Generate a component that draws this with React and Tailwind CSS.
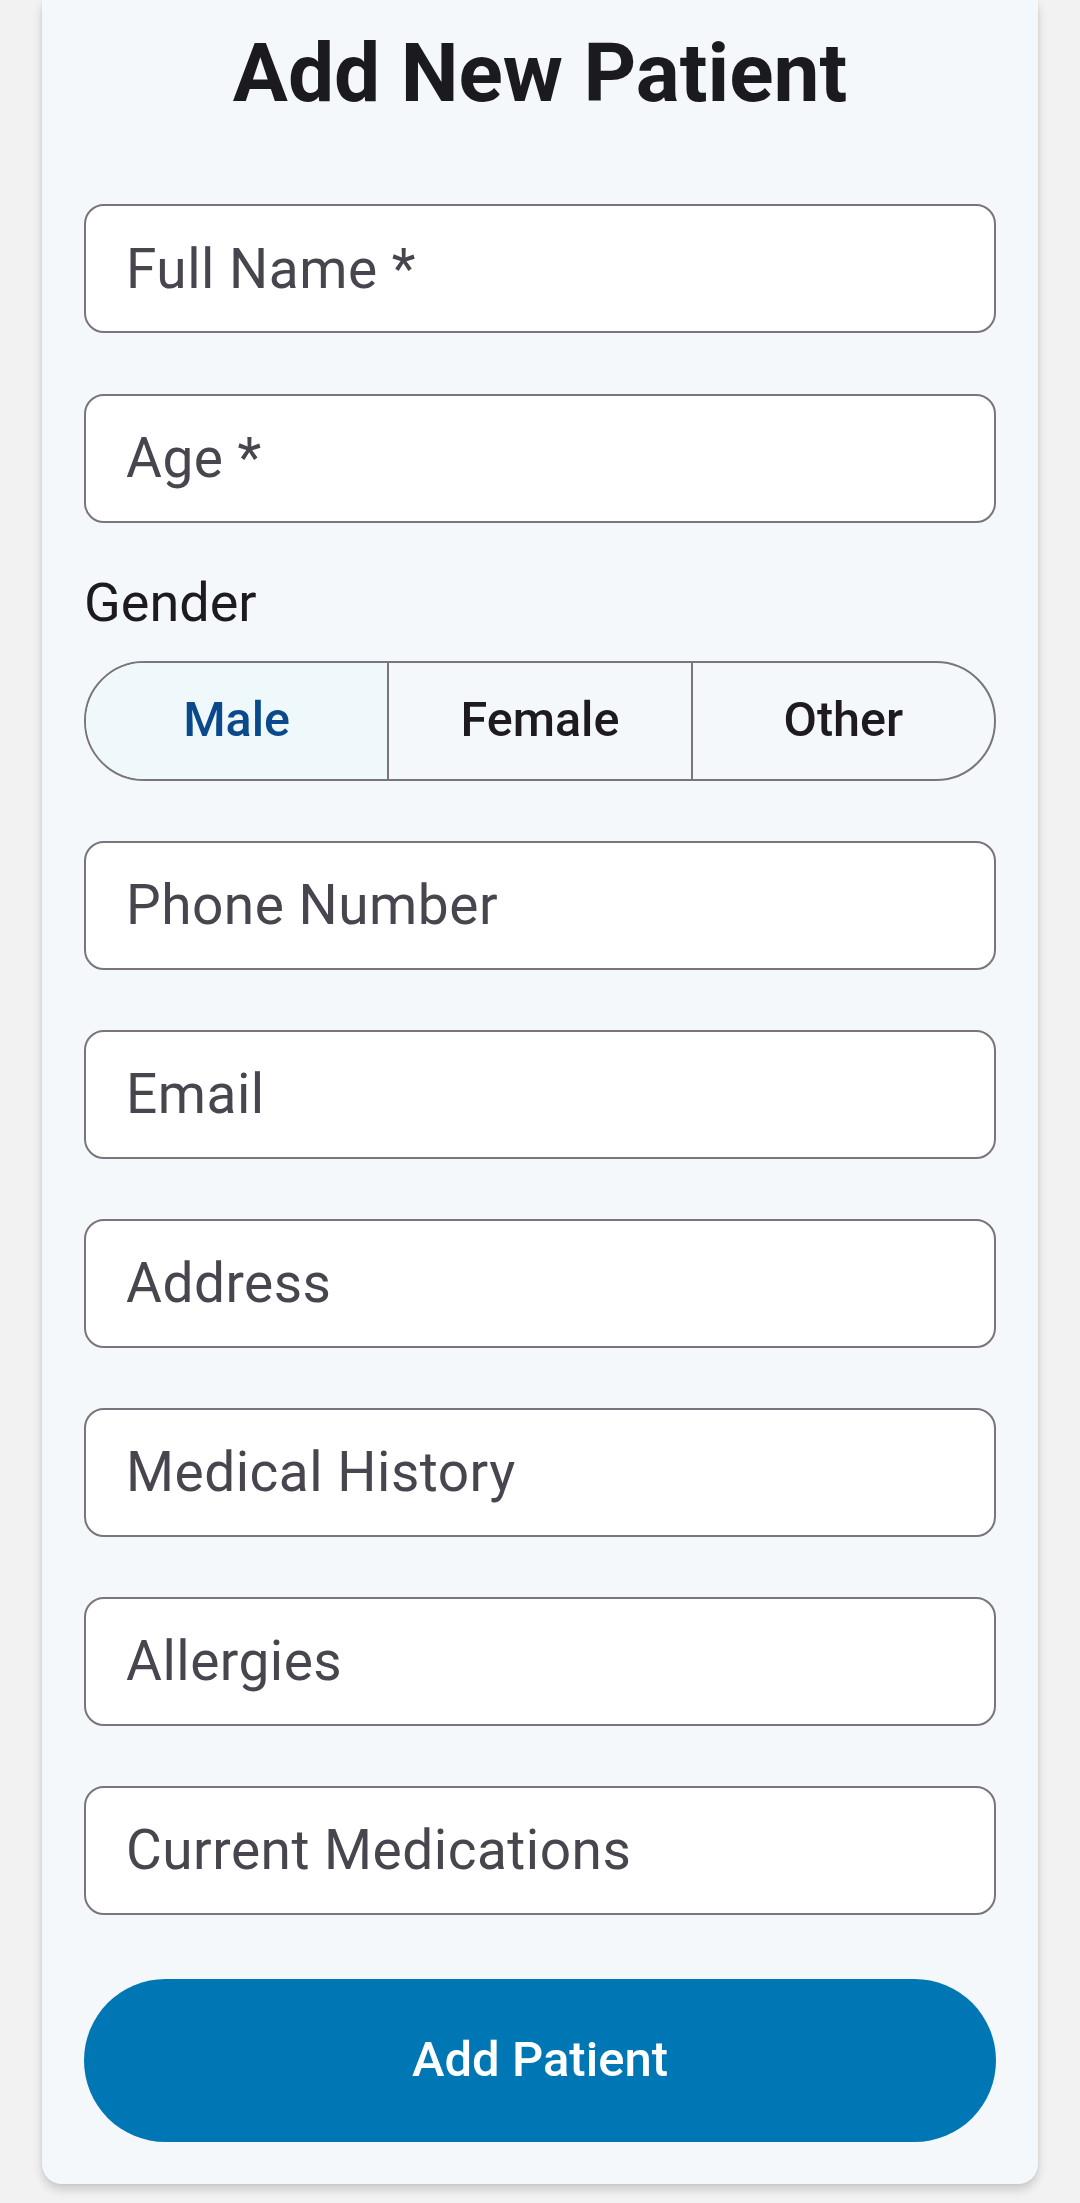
import React, { useState } from 'react';

const fields = [
  { key: 'phone', label: 'Phone Number' },
  { key: 'email', label: 'Email' },
  { key: 'address', label: 'Address' },
  { key: 'history', label: 'Medical History' },
  { key: 'allergies', label: 'Allergies' },
  { key: 'meds', label: 'Current Medications' },
];

function Field({ placeholder, value, onChange, className = '' }) {
  return (
    <input
      type="text"
      placeholder={placeholder}
      value={value}
      onChange={(e) => onChange(e.target.value)}
      className={`block h-[129px] w-full rounded-[20px] border-2 border-[#79747e] bg-white px-[40px] text-[55px] tracking-[0.5px] text-[#1d1b20] outline-none placeholder:text-[#49454f] ${className}`}
    />
  );
}

export default function App() {
  const [form, setForm] = useState({});
  const [gender, setGender] = useState('Male');

  const update = (key) => (val) => setForm((f) => ({ ...f, [key]: val }));

  return (
    <div className="min-h-screen bg-[#f2f2f2]" style={{ fontFamily: 'Roboto, "Noto Sans", sans-serif' }}>
      <div className="mx-[42px] rounded-b-[20px] bg-[#f5f8fb] px-[42px] pt-[24px] pb-[42px] shadow-[0_6px_10px_rgba(0,0,0,0.16),0_0_3px_rgba(0,0,0,0.08)]">
        <h1 className="text-center text-[82px] font-bold leading-[1.2] text-[#1b1b1f]">Add New Patient</h1>

        <Field className="mt-[82px]" placeholder="Full Name *" value={form.name || ''} onChange={update('name')} />
        <Field className="mt-[60.5px]" placeholder="Age *" value={form.age || ''} onChange={update('age')} />

        <div className="mt-[48px] text-[54px] leading-[1.2] text-[#1d1b20]">Gender</div>
        <div className="mt-[25px] flex h-[120px] overflow-hidden rounded-full border-2 border-[#79747e]">
          {['Male', 'Female', 'Other'].map((g, i) => (
            <button
              key={g}
              type="button"
              onClick={() => setGender(g)}
              className={`flex flex-1 items-center justify-center text-[48.5px] font-medium ${
                i > 0 ? 'border-l-2 border-[#79747e]' : ''
              } ${gender === g ? 'bg-[#eff8fb] text-[#0a4a8c]' : 'bg-transparent text-[#1d1b20]'}`}
            >
              {g}
            </button>
          ))}
        </div>

        {fields.map((f) => (
          <Field
            key={f.key}
            className="mt-[60px]"
            placeholder={f.label}
            value={form[f.key] || ''}
            onChange={update(f.key)}
          />
        ))}

        <button
          type="button"
          className="mt-[64px] flex h-[163px] w-full items-center justify-center rounded-full bg-[#0077b5] text-[49px] font-medium text-white"
        >
          Add Patient
        </button>
      </div>
    </div>
  );
}
